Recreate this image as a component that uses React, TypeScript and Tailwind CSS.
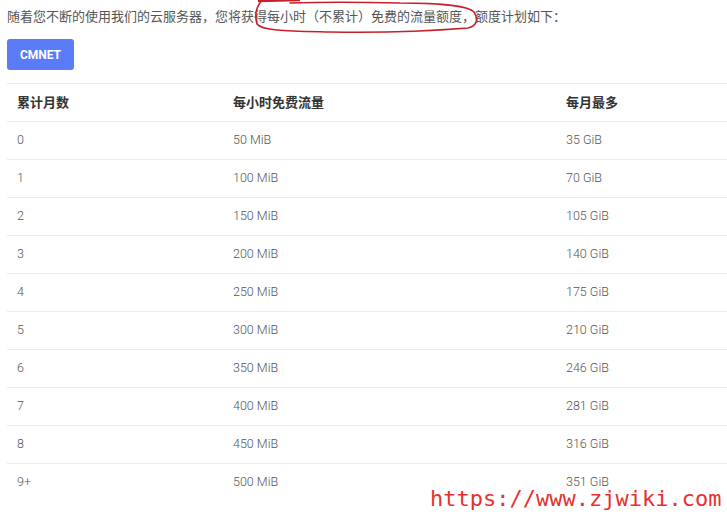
import React from 'react'

const rows: [string, string, string][] = [
  ['0', '50 MiB', '35 GiB'],
  ['1', '100 MiB', '70 GiB'],
  ['2', '150 MiB', '105 GiB'],
  ['3', '200 MiB', '140 GiB'],
  ['4', '250 MiB', '175 GiB'],
  ['5', '300 MiB', '210 GiB'],
  ['6', '350 MiB', '246 GiB'],
  ['7', '400 MiB', '281 GiB'],
  ['8', '450 MiB', '316 GiB'],
  ['9+', '500 MiB', '351 GiB'],
]

export default function App() {
  return (
    <div className="relative w-[727px] h-[518px] overflow-hidden bg-white font-['Roboto','Noto_Sans_CJK_SC',sans-serif]">
      <div className="pl-[7px] pt-[8px]">
        <p className="text-[13px] leading-[18px] text-[#555]">
          随着您不断的使用我们的云服务器，您将获得每小时（不累计）免费的流量额度，额度计划如下：
        </p>

        <button className="mt-[13px] h-[31px] w-[67px] rounded-[3px] bg-[#5b7cf9] text-[12px] font-bold text-white">
          CMNET
        </button>

        <table className="mt-[13px] w-[730px] table-fixed border-collapse text-left">
          <colgroup>
            <col className="w-[226px]" />
            <col className="w-[333px]" />
            <col />
          </colgroup>
          <thead>
            <tr className="h-[38px] border-t border-b border-[#ebebeb]">
              <th className="pl-[10px] text-[13px] font-semibold text-[#333]">累计月数</th>
              <th className="text-[13px] font-semibold text-[#333]">每小时免费流量</th>
              <th className="text-[13px] font-semibold text-[#333]">每月最多</th>
            </tr>
          </thead>
          <tbody>
            {rows.map((r, i) => (
              <tr key={r[0]} className={`h-[38px] ${i < rows.length - 1 ? 'border-b border-[#ebebeb]' : ''}`}>
                <td className="pl-[10px] text-[12.5px] font-light text-[#555]">{r[0]}</td>
                <td className="text-[12.5px] font-light text-[#555]">{r[1]}</td>
                <td className="text-[12.5px] font-light text-[#555]">{r[2]}</td>
              </tr>
            ))}
          </tbody>
        </table>
      </div>

      {/* red hand-drawn marker */}
      <svg className="absolute left-0 top-0" width="727" height="40" viewBox="0 0 727 40" fill="none">
        <path
          d="M262 0 C257 6 254 14 257 24 C262 31 290 31 330 32 C380 33 430 31 468 28 C478 26 478 18 474 12 C468 5 430 3 400 3 C360 2 320 2 290 3"
          stroke="#c8202a"
          strokeWidth="1.6"
          strokeLinecap="round"
        />
        <path d="M258 1 L300 0" stroke="#c8202a" strokeWidth="2.5" />
      </svg>

      {/* watermark */}
      <div className="absolute left-[430px] top-[485px] font-['DejaVu_Sans_Mono',monospace] text-[22px] leading-[28px] text-[#e8302f]">
        https://www.zjwiki.com
      </div>
    </div>
  )
}
